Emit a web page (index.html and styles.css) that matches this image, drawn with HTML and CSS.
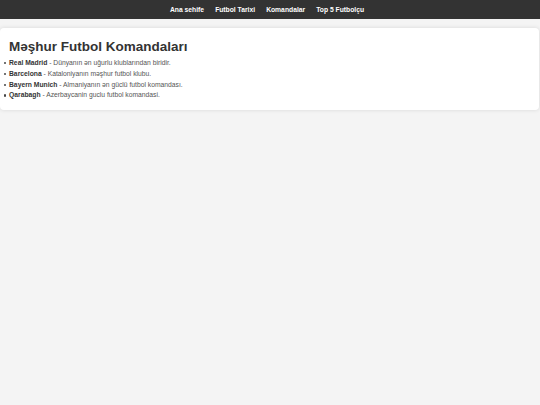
FILE: index.html
```html
<!DOCTYPE html>
<html lang="az">
<head>
<meta charset="utf-8">
<title>Məşhur Futbol Komandaları</title>
<link rel="stylesheet" href="styles.css">
</head>
<body>
<nav class="topnav">
  <a href="#">Ana sehife</a>
  <a href="#">Futbol Tarixi</a>
  <a href="#">Komandalar</a>
  <a href="#">Top 5 Futbolçu</a>
</nav>
<main class="card">
  <h2 class="title">Məşhur Futbol Komandaları</h2>
  <ul class="teams">
    <li><strong>Real Madrid</strong> - Dünyanın ən uğurlu klublarından biridir.</li>
    <li><strong>Barcelona</strong> - Kataloniyanın məşhur futbol klubu.</li>
    <li><strong>Bayern Munich</strong> - Almaniyanın ən güclü futbol komandası.</li>
    <li><strong>Qarabagh</strong> - Azerbaycanin guclu futbol komandasi.</li>
  </ul>
</main>
</body>
</html>
```
FILE: styles.css
```css
html, body {
  margin: 0;
  padding: 0;
}
body {
  background: #f4f4f4;
  font-family: "Liberation Sans", Arial, sans-serif;
  color: #333;
  min-height: 405px;
}
.topnav {
  background: #333;
  height: 19px;
  display: flex;
  justify-content: center;
  align-items: center;
  gap: 11px;
  padding-right: 6px;
}
.topnav a {
  color: #fff;
  text-decoration: none;
  font-weight: bold;
  font-size: 6.75px;
}
.card {
  background: #fff;
  margin: 9px 1px 0 0;
  padding: 10px 9px 9px;
  border-radius: 4px;
  box-shadow: 0 0 4px rgba(0, 0, 0, 0.12);
}
.title {
  margin: 1px 0 4px;
  font-size: 13.5px;
  color: #333;
}
.teams {
  margin: 0;
  padding: 0;
  list-style: none;
  font-size: 6.75px;
  line-height: 1.6;
  color: #555;
}
.teams li::before {
  content: "";
  display: inline-block;
  width: 2.4px;
  height: 2.4px;
  border-radius: 50%;
  background: #444;
  margin-left: -5.4px;
  margin-right: 3px;
  vertical-align: 0.6px;
}
.teams strong {
  color: #333;
}
```
